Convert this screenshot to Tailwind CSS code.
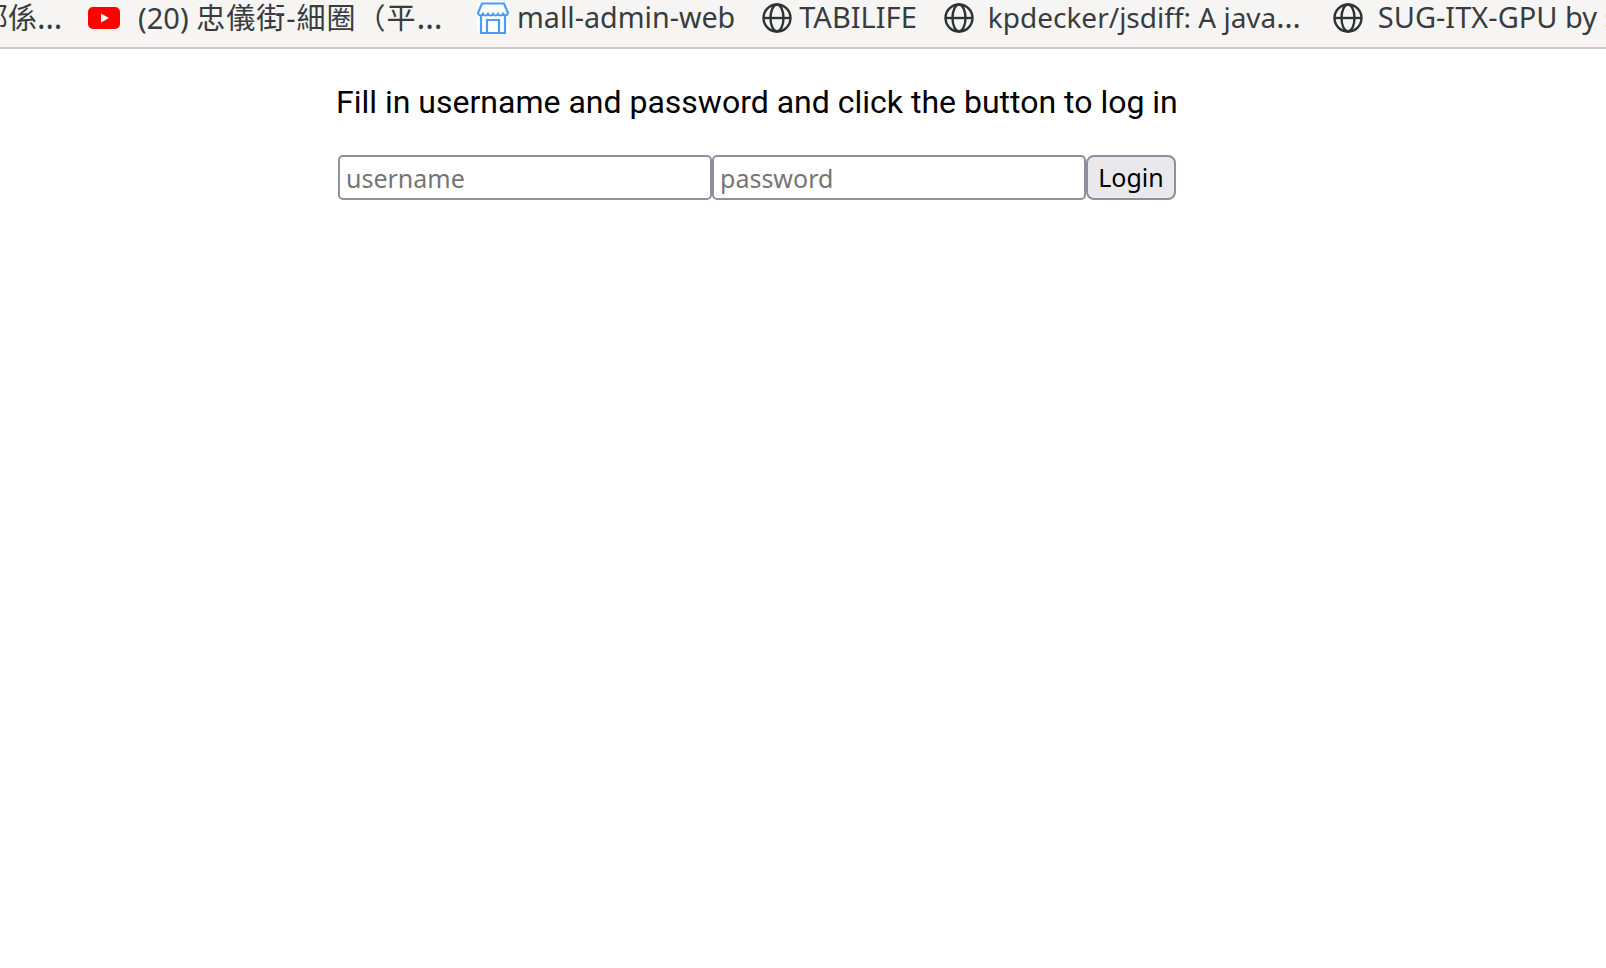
<!DOCTYPE html>
<html lang="en">
<head>
  <meta charset="UTF-8" />
  <title>Login</title>
  <script src="https://cdn.jsdelivr.net/npm/@tailwindcss/browser@4"></script>
</head>
<body class="bg-white overflow-hidden h-[968px]">
  <!-- bookmarks bar -->
  <div class="h-[49px] bg-[#f6f5f4] border-b-2 border-[#cdc9c4] flex items-center overflow-hidden whitespace-nowrap text-[#383c40] text-[29px] font-['Noto_Sans','Noto_Sans_CJK_TC',sans-serif] pb-[11px]">
    <span class="w-[88px] shrink-0 -ml-[21px] pb-[2px]">部係<span class="text-[32px]">…</span></span>
    <svg class="w-8 h-[22px] shrink-0 ml-[21px]" viewBox="0 0 32 22"><rect width="32" height="22" rx="5" fill="#f00"/><path d="M13 6.5 21 11l-8 4.5z" fill="#fff"/></svg>
    <span class="ml-[18px] w-[339px] shrink-0 pb-[2px]">(20) <span class="tracking-[1px]">忠儀街-細圈（平</span><span class="text-[33px]">…</span></span>
    <div class="w-8 h-8 shrink-0 bg-white">
      <svg class="w-8 h-8" viewBox="0 0 32 32" fill="none" stroke="#4a9cf5" stroke-width="2.2"><path d="M5 1.5h22l4 9.5c-1 3-4 3-5 1-1 2-4 2-5 0-1 2-4 2-5 0-1 2-4 2-5 0-1 2-4 2-5 0-1 2-4 2-5-1z"/><path d="M4 14v17h24V14M10 31V18h12v13"/></svg>
    </div>
    <span class="ml-[8px] shrink-0 text-[28.7px] pb-[2px]">mall-admin-web</span>
    <svg class="w-[30px] h-[30px] shrink-0 ml-[27px]" viewBox="0 0 30 30" fill="none" stroke="#2e3436" stroke-width="2.4"><circle cx="15" cy="15" r="13.5"/><ellipse cx="15" cy="15" rx="6.5" ry="13.5"/><path d="M2 15h26"/></svg>
    <span class="ml-[7px] shrink-0 pb-[2px]">TABILIFE</span>
    <svg class="w-[30px] h-[30px] shrink-0 ml-[27px]" viewBox="0 0 30 30" fill="none" stroke="#2e3436" stroke-width="2.4"><circle cx="15" cy="15" r="13.5"/><ellipse cx="15" cy="15" rx="6.5" ry="13.5"/><path d="M2 15h26"/></svg>
    <span class="ml-[14px] w-[345px] shrink-0 text-[28px] pb-[4px]">kpdecker/jsdiff: A java<span class="text-[31px]">…</span></span>
    <svg class="w-[30px] h-[30px] shrink-0" viewBox="0 0 30 30" fill="none" stroke="#2e3436" stroke-width="2.4"><circle cx="15" cy="15" r="13.5"/><ellipse cx="15" cy="15" rx="6.5" ry="13.5"/><path d="M2 15h26"/></svg>
    <span class="ml-[15px] shrink-0 pb-[2px]">SUG-ITX-GPU by s</span>
  </div>

  <div class="pl-[336px] pt-[33px]">
    <p class="text-[32px] leading-[40px] text-black font-['Roboto',sans-serif]">Fill in username and password and click the button to log in</p>
    <div class="mt-[33px] flex items-stretch h-[45px] text-[25px] font-['Noto_Sans',sans-serif]">
      <input type="text" placeholder="username" class="ml-[2px] w-[374px] h-full px-[6px] pt-[1px] border-2 border-[#8f8f9d] rounded-[5px] bg-white placeholder:text-[#757575]" />
      <input type="password" placeholder="password" class="w-[374px] h-full px-[6px] pt-[1px] border-2 border-[#8f8f9d] rounded-[5px] bg-white placeholder:text-[#757575]" />
      <button class="w-[90px] h-full pt-[1px] border-2 border-[#8f8f9d] rounded-[8px] bg-[#e9e9ed] text-black">Login</button>
    </div>
  </div>
</body>
</html>
